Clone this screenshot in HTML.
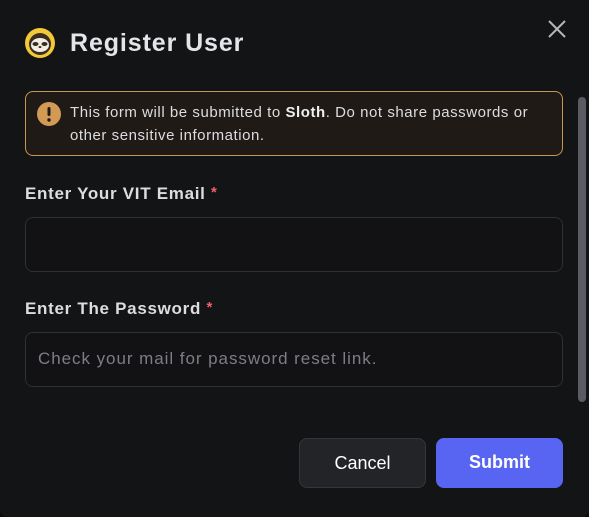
<!DOCTYPE html>
<html><head><style>
*{margin:0;padding:0;box-sizing:border-box}
html,body{width:589px;height:517px;overflow:hidden;background:#0b0b0d}
body{font-family:"Liberation Sans",sans-serif;position:relative}
.m{position:absolute;left:0;top:0;width:589px;height:517px;background:#131416;border-radius:0 0 8px 8px}
.a{position:absolute}
.title{left:70px;top:29px;font-size:25px;font-weight:bold;color:#e4e5e8;letter-spacing:0.9px}
.warn{left:25px;top:91px;width:538px;height:65px;background:#201a16;border:1px solid #c99550;border-radius:8px}
.wt{left:70px;top:101px;font-size:15px;line-height:23px;color:#dcdde0;width:485px;letter-spacing:0.55px;white-space:nowrap}
.lbl{left:25px;font-size:17px;font-weight:bold;color:#dcdde0;letter-spacing:0.7px}
.lbl span{color:#f0616a;font-size:15px;vertical-align:top}
.inp{left:25px;width:538px;height:55px;background:#121214;border:1px solid #2f3035;border-radius:8px}
.btn{top:438px;height:50px;border-radius:8px;font-size:18px;color:#fff;text-align:center;line-height:48px;font-weight:500}
</style></head><body>
<div class="m"></div>
<svg class="a" style="left:25px;top:28px" width="30" height="30" viewBox="0 0 30 30"><circle cx="15" cy="15" r="15" fill="#f3c93a"/><circle cx="15" cy="16" r="11" fill="#3a2e22"/><ellipse cx="15" cy="17" rx="9" ry="7" fill="#f3efe6"/><ellipse cx="10.5" cy="16" rx="3" ry="2" fill="#3a2e22"/><ellipse cx="19.5" cy="16" rx="3" ry="2" fill="#3a2e22"/><ellipse cx="15" cy="19" rx="1.5" ry="1" fill="#3a2e22"/></svg>
<div class="a title">Register User</div>
<svg class="a" style="left:547px;top:19px" width="20" height="20" viewBox="0 0 20 20"><path d="M2 2L18 18M18 2L2 18" stroke="#b5b6bb" stroke-width="2"/></svg>
<div class="a warn"></div>
<svg class="a" style="left:37px;top:102px" width="24" height="24" viewBox="0 0 24 24"><circle cx="12" cy="12" r="12" fill="#d29a55"/><rect x="10.5" y="5" width="3" height="9" rx="1.5" fill="#201a16"/><circle cx="12" cy="18" r="1.7" fill="#201a16"/></svg>
<div class="a wt">This form will be submitted to <b style="color:#f0f0f2">Sloth</b>. Do not share passwords or<br>other sensitive information.</div>
<div class="a" style="left:578px;top:97px;width:8px;height:305px;background:#5b5c63;border-radius:4px"></div>
<div class="a lbl" style="top:184px">Enter Your VIT Email <span>*</span></div>
<div class="a inp" style="top:217px"></div>
<div class="a lbl" style="top:299px">Enter The Password <span>*</span></div>
<div class="a inp" style="top:332px"></div>
<div class="a" style="left:38px;top:349px;font-size:17px;color:#7d7e85;letter-spacing:0.95px">Check your mail for password reset link.</div>
<div class="a btn" style="left:299px;width:127px;background:#232427;border:1px solid #35363b">Cancel</div>
<div class="a btn" style="left:436px;width:127px;background:#5865f2;font-weight:bold">Submit</div>
</body></html>
